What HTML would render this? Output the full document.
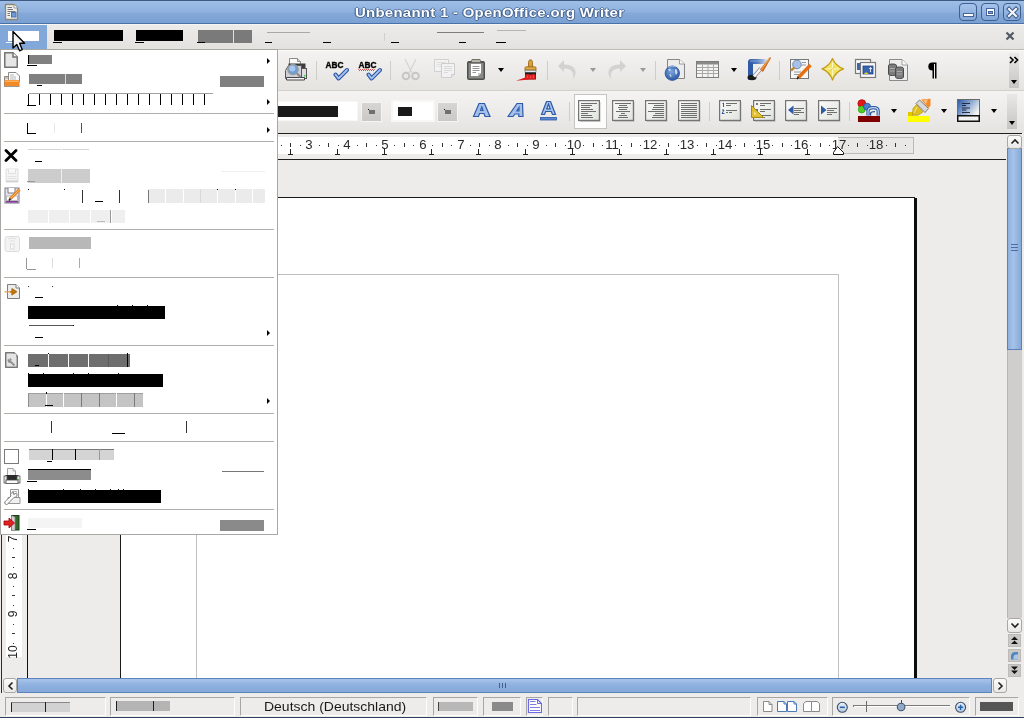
<!DOCTYPE html>
<html><head><meta charset="utf-8">
<style>
*{margin:0;padding:0;box-sizing:border-box}
body{-webkit-font-smoothing:antialiased}
html,body{width:1024px;height:718px;overflow:hidden;background:#edeceb;font-family:"Liberation Sans",sans-serif;position:relative}
div,svg{position:absolute}
#title{left:0;top:0;width:1024px;height:24px;background:linear-gradient(#9fbee8 0,#8fb1de 50%,#85a9d8 54%,#7aa1d3 100%);border-top:1px solid #3d5a80;border-bottom:1px solid #4a70a8}
#ttext{will-change:transform;left:355px;top:5px;white-space:nowrap;font-weight:bold;font-size:13px;line-height:15px;letter-spacing:0.25px;transform:scaleX(1.148);transform-origin:0 0;color:#fff;text-shadow:1px 0 0 rgba(50,80,125,.7),-1px 0 0 rgba(50,80,125,.7),0 1px 0 rgba(50,80,125,.7),0 -1px 0 rgba(50,80,125,.5)}
.wb{top:3px;width:18px;height:18px;border:1px solid #3f5f8f;border-radius:4px;background:linear-gradient(#a6c3ea,#82a6d8)}
#menubar{left:0;top:24px;width:1024px;height:26px;background:linear-gradient(#ecebe9,#e8e7e5 50%,#e2e1de);border-top:1px solid #f6f5f4;border-bottom:1px solid #bfbcb8}
.tb{left:0;width:1024px;background:linear-gradient(#f4f3f2,#ebeae8 60%,#e4e3e0)}
.sep{width:1px;background:#cfcdc9}
.k{background:#000}
.g{background:#6e6e6e}
.ul{height:1px;background:#000}
.arr{width:0;height:0;border-left:3px solid #000;border-top:3px solid transparent;border-bottom:3px solid transparent}
.msep{left:4px;width:270px;height:1px;background:#b0aeab}
.dd{width:0;height:0;border-top:4px solid #000;border-left:3.5px solid transparent;border-right:3.5px solid transparent}
.sf{top:697px;height:19px;border:1px solid #a9a7a3;border-right-color:#fdfdfc;border-bottom-color:#fdfdfc}
.tx{will-change:transform}
.rn{will-change:transform;width:40px;text-align:center;font-size:12px;line-height:14px;color:#2a2a2a;transform:scaleX(1.1)}
.rv{will-change:transform;width:40px;height:14px;text-align:center;font-size:12px;line-height:14px;color:#222;transform:rotate(-90deg)}
</style></head><body>
<!-- TITLE -->
<div id="title"></div>
<svg style="left:4px;top:3px" width="15" height="18" viewBox="0 0 15 18">
<path d="M1.5 1.5H10L13.5 5V16.5H1.5Z" fill="#efefec" stroke="#8c8678" stroke-width="1.3" stroke-linejoin="round"/>
<path d="M10 1.5V5H13.5" fill="#fff" stroke="#8c8678" stroke-width="0.8"/>
<path d="M3.5 4.5H8M3.5 6.5H9M3.5 8.5H11.5M3.5 10.5H6M3.5 12.5H6" stroke="#777" stroke-width="1"/>
<rect x="7.5" y="9.5" width="4.5" height="4.5" fill="#6f9ad6" stroke="#4a74b8" stroke-width="1"/>
</svg>
<div id="ttext">Unbenannt 1 - OpenOffice.org Writer</div>
<div class="wb" style="left:959px"><div style="left:3px;top:9px;width:11px;height:4px;background:#fff;border:1px solid #44649a"></div></div>
<div class="wb" style="left:981px"><div style="left:4px;top:4px;width:9px;height:8px;background:#fff;border:1px solid #44649a"><div style="left:1px;top:2px;width:5px;height:3px;background:#7a9cd0;border:1px solid #44649a"></div></div></div>
<div class="wb" style="left:1003px"><svg style="left:2px;top:2px" width="14" height="14" viewBox="0 0 14 14"><path d="M3 3L10 10M10 3L3 10" stroke="#3d5a88" stroke-width="4.2" stroke-linecap="square"/><path d="M3 3L10 10M10 3L3 10" stroke="#f4f6fa" stroke-width="2.2" stroke-linecap="square"/></svg></div>
<!-- MENUBAR -->
<div id="menubar"></div>
<svg style="left:1005px;top:31px" width="10" height="10" viewBox="0 0 10 10"><path d="M1.5 1.5L8.5 8.5M8.5 1.5L1.5 8.5" stroke="#525a64" stroke-width="2.2"/></svg>

<div style="left:0;top:25px;width:47px;height:24px;background:#82a8d9"></div>
<div style="left:8px;top:31px;width:31px;height:10px;background:#fff"></div>
<div class="ul" style="left:6px;top:42px;width:7px;background:#fff"></div>
<div class="k" style="left:54px;top:30px;width:69px;height:11px"></div>
<div class="ul" style="left:53px;top:42px;width:9px"></div>
<div class="k" style="left:136px;top:30px;width:47px;height:11px"></div>
<div class="ul" style="left:135px;top:42px;width:9px"></div>
<div style="left:198px;top:30px;width:54px;height:13px;background:#7a7a7a"></div>
<div style="left:233px;top:30px;width:1px;height:13px;background:#e0e0e0"></div>
<div class="ul" style="left:197px;top:42px;width:8px"></div>
<div style="left:267px;top:32px;width:43px;height:1px;background:#a8a8a8"></div>
<div class="ul" style="left:265px;top:42px;width:7px"></div>
<div class="ul" style="left:323px;top:42px;width:8px"></div>
<div style="left:384px;top:33px;width:1px;height:8px;background:#d0d0d0"></div>
<div class="ul" style="left:391px;top:42px;width:8px"></div>
<div style="left:437px;top:32px;width:47px;height:1px;background:#7c7c7c"></div>
<div class="ul" style="left:459px;top:42px;width:7px"></div>
<div style="left:497px;top:30px;width:29px;height:1px;background:#b4b4b4"></div>
<div class="ul" style="left:496px;top:42px;width:10px"></div>
<!-- TOOLBAR 1 -->
<div class="tb" style="top:50px;height:41px;border-bottom:1px solid #d3d1cd"></div><div style="left:0;top:50px;width:1024px;height:1px;background:#fafaf9"></div>
<!-- TB1 ICONS -->
<svg style="left:284px;top:57px" width="24" height="24" viewBox="0 0 24 24">
<path d="M5.5 1.5H13.5L16.5 4.5V8H5.5Z" fill="#fafafa" stroke="#8a8a8a"/>
<path d="M13.5 1.5V4.5H16.5" fill="#ddd" stroke="#8a8a8a"/>
<path d="M4.5 6.5H21.5V19.5H4.5Z" fill="#3c3c3c"/>
<path d="M1.5 13.5L4.5 8.5H17.5V21.5H1.5Z" fill="#cfd0d6" stroke="#555"/>
<rect x="17.5" y="11.5" width="5" height="10" fill="#dcdde2" stroke="#555"/>
<rect x="20" y="18" width="1.5" height="1.5" fill="#3c3"/>
<path d="M2.5 20.5H20.5V23H2.5Z" fill="#f4f4f4" stroke="#444"/>
<line x1="12.5" y1="16" x2="16.5" y2="20" stroke="#888" stroke-width="2"/>
<circle cx="9" cy="12.5" r="5.2" fill="#6f9fd6" stroke="#9a9a9a" stroke-width="1.2"/>
<circle cx="8.3" cy="11.5" r="3" fill="#a9c8ee"/>
</svg>
<div class="sep" style="left:316px;top:61px;height:19px"></div>
<svg style="left:325px;top:61px;will-change:transform" width="24" height="20" viewBox="0 0 24 20">
<text x="0.5" y="7.2" font-family="Liberation Sans" font-weight="bold" font-size="8.6" fill="#000" stroke="#000" stroke-width="0.35" textLength="18" lengthAdjust="spacingAndGlyphs">ABC</text>
<path d="M10.5 13.5L13.5 17.5L22 9" fill="none" stroke="#2a55a8" stroke-width="4" stroke-linecap="round" stroke-linejoin="round"/>
<path d="M10.5 13.5L13.5 17.5L22 9" fill="none" stroke="#a7c3ec" stroke-width="1.8" stroke-linecap="round" stroke-linejoin="round"/>
</svg>
<svg style="left:358px;top:61px;will-change:transform" width="24" height="20" viewBox="0 0 24 20">
<text x="0.5" y="7.2" font-family="Liberation Sans" font-weight="bold" font-size="8.6" fill="#000" stroke="#000" stroke-width="0.35" textLength="18" lengthAdjust="spacingAndGlyphs">ABC</text>
<path d="M0.5 8.5l1 1l1-1l1 1l1-1l1 1l1-1l1 1l1-1l1 1l1-1l1 1l1-1l1 1l1-1l1 1l1-1" fill="none" stroke="#e01010" stroke-width="1"/>
<path d="M10.5 13.5L13.5 17.5L22 9" fill="none" stroke="#2a55a8" stroke-width="4" stroke-linecap="round" stroke-linejoin="round"/>
<path d="M10.5 13.5L13.5 17.5L22 9" fill="none" stroke="#a7c3ec" stroke-width="1.8" stroke-linecap="round" stroke-linejoin="round"/>
</svg>
<div class="sep" style="left:390px;top:61px;height:19px"></div>
<svg style="left:401px;top:58px" width="20" height="23" viewBox="0 0 20 23">
<path d="M4 1L11 15M15 1L8 15" stroke="#d4d4d4" stroke-width="1.2"/>
<circle cx="5" cy="18" r="3.3" fill="none" stroke="#c6c6c6" stroke-width="2"/>
<circle cx="14.5" cy="18" r="3.3" fill="none" stroke="#c6c6c6" stroke-width="2"/>
</svg>
<svg style="left:433px;top:58px" width="24" height="21" viewBox="0 0 24 21"><path d="M1.5 1.5H15.5V13.5H1.5Z" fill="#f2f2f2" stroke="#d0d0d0"/><path d="M3.5 4.5H13M3.5 6.5H13M3.5 8.5H8" stroke="#e0e0e0"/><path d="M8.5 5.5H21.5V16.5L18.5 19.5H8.5Z" fill="#f2f2f2" stroke="#cdcdcd"/><path d="M11 8.5H19M11 10.5H19M11 12.5H19M11 14.5H15" stroke="#dadada"/><path d="M18.5 19.5V16.5H21.5" fill="#e8e8e8" stroke="#cdcdcd"/></svg>
<svg style="left:466px;top:58px" width="20" height="23" viewBox="0 0 20 23"><rect x="1" y="3" width="18" height="19" rx="2" fill="#4e4e4c"/><rect x="2.5" y="5" width="15" height="15.5" fill="#8a8a86"/><path d="M6 1.5H14L15 4.5H5Z" fill="#b8b8a8" stroke="#666" stroke-width="0.9"/><path d="M5 6H15V15L12 18H5Z" fill="#fff"/><path d="M12 18V15H15" fill="#ccc"/><path d="M6.5 8.5H13.5M6.5 10.5H13.5M6.5 12.5H13.5M6.5 14.5H10" stroke="#8a8a8a" stroke-width="0.9"/></svg>
<div class="dd" style="left:498px;top:68px"></div>
<svg style="left:512px;top:56px" width="30" height="28" viewBox="0 0 30 28"><path d="M16.5 11.5V6.5C16.5 4.5 17.5 3.8 18.5 3.8C19.5 3.8 20.5 4.5 20.5 6.5V11.5Z" fill="#d9a040" stroke="#9a6a18" stroke-width="0.9"/><path d="M13 14V12C13 11.2 13.5 10.8 14.5 10.8H22.5C23.5 10.8 24 11.2 24 12V14Z" fill="#e0aa48" stroke="#9a6a18" stroke-width="0.9"/><rect x="13" y="14.2" width="11" height="2.2" fill="#e8e8e8" stroke="#555" stroke-width="0.5"/><rect x="13" y="16.4" width="11" height="7" fill="#1c1c1c"/><path d="M13.5 18.5L16 18L18.5 18.8L21 18L23.5 18.5V23.5H18L4 24.8L9 23L13 21.5Z" fill="#e01c1c"/><path d="M15 19.5L16 22M18 19.5L19 22M21 19.5L22 22" stroke="#f07070" stroke-width="0.7"/></svg>
<div class="sep" style="left:547px;top:61px;height:19px"></div>
<svg style="left:557px;top:59px" width="21" height="21" viewBox="0 0 21 21">
<path d="M7 1L1 7L7 13V9.5C12 9.5 15 11 16 15C16.5 17 16 19 15.5 20C19 17 19.5 12 17 9C15 7 12 5.5 7 5.5Z" fill="#d2d2d2"/>
</svg>
<div class="dd" style="left:590px;top:68px;border-top-color:#9a9a9a"></div>
<svg style="left:606px;top:59px" width="21" height="21" viewBox="0 0 21 21">
<path d="M14 1L20 7L14 13V9.5C9 9.5 6 11 5 15C4.5 17 5 19 5.5 20C2 17 1.5 12 4 9C6 7 9 5.5 14 5.5Z" fill="#d2d2d2"/>
</svg>
<div class="dd" style="left:640px;top:68px;border-top-color:#9a9a9a"></div>
<div class="sep" style="left:655px;top:61px;height:19px"></div>
<svg style="left:660px;top:55px" width="30" height="30" viewBox="0 0 30 30"><defs><radialGradient id="glb" cx="0.45" cy="0.4" r="0.6"><stop offset="0" stop-color="#7ea6dc"/><stop offset="1" stop-color="#2a58a6"/></radialGradient></defs><path d="M7.5 4.5H19.5L24.5 9V23.5H7.5Z" fill="#ececec" stroke="#858585" stroke-width="1"/><path d="M19.5 4.5V9H24.5" fill="#fafafa" stroke="#858585" stroke-width="0.8"/><circle cx="12.3" cy="18.2" r="7.2" fill="url(#glb)" stroke="#2a4f96" stroke-width="0.8"/><path d="M8 14.5L10 13.5L11 15L9.5 16.5Z M9.5 19L11 19.5L11.5 22L10 21.5Z M15 14L17 14.5L17.5 18L16 20L15 17.5Z" fill="#c8d8ee"/><path d="M8.5 12.5C10.5 11 14 11 16 12" stroke="#b8d0f0" stroke-width="0.8" fill="none"/></svg>
<svg style="left:696px;top:61px" width="24" height="18" viewBox="0 0 24 18">
<rect x="0.5" y="0.5" width="22" height="16" fill="#f4f4f2" stroke="#7c7c7a"/>
<rect x="1" y="1" width="21" height="2.5" fill="#8a8a88"/>
<path d="M1 6.5H22M1 9.5H22M1 12.5H22M6.5 3.5V16M12 3.5V16M17.5 3.5V16" stroke="#a8a8a6"/>
</svg>
<div class="dd" style="left:731px;top:68px"></div>
<svg style="left:744px;top:55px" width="30" height="30" viewBox="0 0 30 30"><defs><linearGradient id="drw" x1="0" y1="0" x2="1" y2="0"><stop offset="0" stop-color="#2a55a2"/><stop offset="0.5" stop-color="#5a82c0"/><stop offset="1" stop-color="#5a82c0" stop-opacity="0"/></linearGradient></defs><path d="M4 24.5V7C4 5 5 4 7 4H24V9H9V24.5Z" fill="url(#drw)"/><path d="M4 8V24.5H9V8Z" fill="#2f5aa6"/><path d="M6 6H20" stroke="#8eaee0" stroke-width="0.8"/><ellipse cx="8" cy="22.5" rx="4.5" ry="2.7" fill="#1a1a1a"/><path d="M10 21.5L17 13.5" stroke="#888" stroke-width="4"/><path d="M10 21.5L17 13.5" stroke="#f4f4f4" stroke-width="2.6"/><path d="M16 14.5L19 17L27 3L26 2Z" fill="#c8661a"/><path d="M17.5 15L25.5 3.5" stroke="#f0a050" stroke-width="1.2"/></svg>
<div class="sep" style="left:779px;top:61px;height:19px"></div>
<svg style="left:789px;top:58px" width="24" height="22" viewBox="0 0 24 22">
<rect x="1.5" y="1.5" width="18" height="19" fill="#f6f6f6" stroke="#777"/>
<path d="M13 4.5H17M13 7H17M5 14H12M5 16.5H10" stroke="#999"/>
<circle cx="8" cy="6.5" r="4.3" fill="#a7c2e6" stroke="#6e8cb8"/>
<path d="M5.5 9.5L2 12.5" stroke="#c58a30" stroke-width="2.5"/>
<path d="M9 20L21.5 7" stroke="#e86e10" stroke-width="3.4"/>
<path d="M8 21L9.5 19" stroke="#222" stroke-width="1.5"/>
</svg>
<svg style="left:821px;top:57px" width="24" height="25" viewBox="0 0 24 25"><path d="M11.5 1.5Q14.5 9 22.5 11.8Q14.5 14.5 11.5 23Q8.5 14.5 1 11.8Q8.5 9 11.5 1.5Z" fill="#f2e464" stroke="#c49c18" stroke-width="1.3" stroke-linejoin="round"/><path d="M11.5 5V19M5 11.8H18" stroke="#fcf6c0" stroke-width="1"/><path d="M11.5 11.8L14 9.5M11.5 11.8L9 14" stroke="#d8c030" stroke-width="0.8"/></svg>
<svg style="left:854px;top:58px" width="23" height="21" viewBox="0 0 23 21"><rect x="1.5" y="1.5" width="15" height="14" fill="#f8f8f8" stroke="#7a7a7a" stroke-width="1.2"/><rect x="3" y="5" width="5" height="7" fill="#3a66b0"/><rect x="6.5" y="4.5" width="15" height="15" fill="#fafafa" stroke="#7a7a7a" stroke-width="1.2"/><rect x="9" y="8" width="10" height="8" fill="#3a66b0" stroke="#20407a" stroke-width="0.8"/><path d="M10 16C11 14 13.5 14 14.5 16Z" fill="#f0d020"/><path d="M16.5 9.5V14M15 11L16.5 9.5L18 11" stroke="#fff" stroke-width="0.8" fill="none"/></svg>
<svg style="left:887px;top:58px" width="22" height="24" viewBox="0 0 22 24"><path d="M2.5 1.5H15L20.5 7V22.5H2.5Z" fill="#ededed" stroke="#8a8a8a"/><path d="M15 1.5V7H20.5" fill="#fafafa" stroke="#8a8a8a" stroke-width="0.8"/><path d="M1.5 7.5C1.5 5.5 9.5 5.5 9.5 7.5V16C9.5 18 1.5 18 1.5 16Z" fill="#7c7c7c" stroke="#4a4a4a"/><path d="M3 10.5H8M3 13H8" stroke="#b0b0b0" stroke-width="0.9"/><path d="M8.5 10.5C8.5 8.5 16.5 8.5 16.5 10.5V19C16.5 21 8.5 21 8.5 19Z" fill="#7c7c7c" stroke="#4a4a4a"/><path d="M10 13.5H15M10 16H15" stroke="#b0b0b0" stroke-width="0.9"/></svg>
<svg style="left:928px;top:62px" width="9" height="17" viewBox="0 0 9 17"><path d="M4 0.5H8.5V16.5H7V2H6V16.5H4.5V8.5C1.5 8.5 0.3 7 0.3 4.5C0.3 2 1.8 0.5 4 0.5Z" fill="#000"/></svg>
<div style="left:1009px;top:53px;width:10px;height:35px;background:linear-gradient(#e9e8e6,#c6c5c3)"></div>
<svg style="left:1009px;top:56px" width="11" height="8" viewBox="0 0 11 8"><path d="M1 1L4 4L1 7M5.5 1L8.5 4L5.5 7" fill="none" stroke="#000" stroke-width="1.6"/></svg>
<div class="dd" style="left:1011px;top:80px"></div>
<!-- TOOLBAR 2 -->
<div class="tb" style="top:91px;height:42px"></div>
<svg width="0" height="0" style="left:0;top:0"><defs><linearGradient id="fg" x1="0" y1="0" x2="1" y2="1"><stop offset="0" stop-color="#fbfbfb"/><stop offset="1" stop-color="#dfe3dc"/></linearGradient></defs></svg><div style="left:270px;top:101px;width:88px;height:20px;background:#fff;border:1px solid #f6f6f6"></div>
<div class="k" style="left:278px;top:106px;width:60px;height:11px;background:#1a1a1a"></div>
<div style="left:361px;top:102px;width:21px;height:20px;background:linear-gradient(#d6d5d3,#cac9c7);border:1px solid #f4f4f3"></div><div style="left:369px;top:110px;width:6px;height:4px;background:#707070"></div><div style="left:368px;top:109px;width:1px;height:1px;background:#111"></div>
<div style="left:391px;top:100px;width:44px;height:22px;background:#fff;border:2px solid #f7f7f6"></div>
<div style="left:398px;top:107px;width:14px;height:9px;background:#1a1a1a"></div>
<div style="left:437px;top:102px;width:21px;height:20px;background:linear-gradient(#d6d5d3,#cac9c7);border:1px solid #f4f4f3"></div><div style="left:445px;top:110px;width:6px;height:4px;background:#707070"></div><div style="left:444px;top:109px;width:1px;height:1px;background:#111"></div>
<svg style="left:472px;top:102px" width="20" height="17" viewBox="0 0 20 17"><path d="M1.5 14.5L7 1.5H12.5L18 14.5H13L12 11.5H7.5L6.5 14.5Z M8.5 8.5H11L9.8 5Z" fill="#a4c0ea" stroke="#2e5aa8" stroke-width="1.2" fill-rule="evenodd"/></svg>
<svg style="left:507px;top:102px" width="18" height="17" viewBox="0 0 18 17"><path d="M1 14.5L10 1.5H15.5L16 14.5H11.8L11.8 12H8L6 14.5Z M9.8 9H12L12 5.5Z" fill="#a4c0ea" stroke="#2e5aa8" stroke-width="1.2" fill-rule="evenodd"/></svg>
<svg style="left:540px;top:101px" width="18" height="21" viewBox="0 0 18 21"><path d="M1.5 13.5L6.5 0.5H10.5L15.5 13.5H12.5L11.3 10.5H5.7L4.5 13.5Z M6.8 7.8H10.2L8.5 3Z" fill="#a4c0ea" stroke="#2e5aa8" stroke-width="1.2" fill-rule="evenodd"/><rect x="0.5" y="16.5" width="16" height="2.5" fill="#5b86cc" stroke="#2e5aa8" stroke-width="0.8"/></svg>
<div class="sep" style="left:569px;top:102px;height:19px"></div>
<div style="left:574px;top:94px;width:33px;height:35px;background:#fdfdfd;border:1px solid #c6c4c0"></div>
<svg style="left:578px;top:100px" width="23" height="22" viewBox="0 0 23 22"><rect x="1.5" y="2" width="21" height="20" fill="#c4c4c2"/><rect x="0.6" y="0.6" width="20.8" height="19.8" fill="url(#fg)" stroke="#747472" stroke-width="1.2"/><rect x="3" y="3" width="16" height="1" fill="#6e6e6c"/><rect x="3" y="5" width="11" height="1" fill="#6e6e6c"/><rect x="3" y="7" width="9" height="1" fill="#6e6e6c"/><rect x="3" y="9" width="12" height="1" fill="#6e6e6c"/><rect x="3" y="11" width="15" height="1" fill="#6e6e6c"/><rect x="3" y="13" width="7" height="1" fill="#6e6e6c"/><rect x="3" y="15" width="11" height="1" fill="#6e6e6c"/><rect x="3" y="17" width="12" height="1" fill="#6e6e6c"/></svg>
<svg style="left:612px;top:100px" width="23" height="22" viewBox="0 0 23 22"><rect x="1.5" y="2" width="21" height="20" fill="#c4c4c2"/><rect x="0.6" y="0.6" width="20.8" height="19.8" fill="url(#fg)" stroke="#747472" stroke-width="1.2"/><rect x="3" y="3" width="16" height="1" fill="#6e6e6c"/><rect x="7" y="5" width="8" height="1" fill="#6e6e6c"/><rect x="6" y="7" width="10" height="1" fill="#6e6e6c"/><rect x="7" y="9" width="8" height="1" fill="#6e6e6c"/><rect x="4" y="11" width="14" height="1" fill="#6e6e6c"/><rect x="9" y="13" width="4" height="1" fill="#6e6e6c"/><rect x="7" y="15" width="8" height="1" fill="#6e6e6c"/><rect x="6" y="17" width="10" height="1" fill="#6e6e6c"/></svg>
<svg style="left:645px;top:100px" width="23" height="22" viewBox="0 0 23 22"><rect x="1.5" y="2" width="21" height="20" fill="#c4c4c2"/><rect x="0.6" y="0.6" width="20.8" height="19.8" fill="url(#fg)" stroke="#747472" stroke-width="1.2"/><rect x="3" y="3" width="16" height="1" fill="#6e6e6c"/><rect x="9" y="5" width="10" height="1" fill="#6e6e6c"/><rect x="8" y="7" width="11" height="1" fill="#6e6e6c"/><rect x="7" y="9" width="12" height="1" fill="#6e6e6c"/><rect x="3" y="11" width="16" height="1" fill="#6e6e6c"/><rect x="10" y="13" width="9" height="1" fill="#6e6e6c"/><rect x="8" y="15" width="11" height="1" fill="#6e6e6c"/><rect x="7" y="17" width="12" height="1" fill="#6e6e6c"/></svg>
<svg style="left:678px;top:100px" width="23" height="22" viewBox="0 0 23 22"><rect x="1.5" y="2" width="21" height="20" fill="#c4c4c2"/><rect x="0.6" y="0.6" width="20.8" height="19.8" fill="url(#fg)" stroke="#747472" stroke-width="1.2"/><rect x="3" y="3" width="16" height="1" fill="#6e6e6c"/><rect x="3" y="5" width="16" height="1" fill="#6e6e6c"/><rect x="3" y="7" width="16" height="1" fill="#6e6e6c"/><rect x="3" y="9" width="16" height="1" fill="#6e6e6c"/><rect x="3" y="11" width="16" height="1" fill="#6e6e6c"/><rect x="3" y="13" width="16" height="1" fill="#6e6e6c"/><rect x="3" y="15" width="16" height="1" fill="#6e6e6c"/><rect x="3" y="17" width="16" height="1" fill="#6e6e6c"/></svg>
<div class="sep" style="left:709px;top:102px;height:19px"></div>
<svg style="left:719px;top:100px" width="23" height="22" viewBox="0 0 23 22"><rect x="1.5" y="2" width="21" height="20" fill="#c4c4c2"/><rect x="0.6" y="0.6" width="20.8" height="19.8" fill="url(#fg)" stroke="#747472" stroke-width="1.2"/><rect x="7" y="3" width="11" height="1" fill="#6e6e6c"/><rect x="7" y="5" width="5" height="1" fill="#6e6e6c"/><rect x="7" y="10" width="11" height="1" fill="#6e6e6c"/><rect x="7" y="12" width="2" height="1" fill="#6e6e6c"/><rect x="10" y="12" width="3" height="1" fill="#6e6e6c"/><path d="M3.5 3.5L4.5 3V7" stroke="#2e5aa8" stroke-width="1" fill="none"/><path d="M3 10H5L3 13.5H5.5" stroke="#2e5aa8" stroke-width="1" fill="none"/></svg>
<svg style="left:753px;top:100px" width="23" height="22" viewBox="0 0 23 22"><rect x="1.5" y="2" width="21" height="20" fill="#c4c4c2"/><rect x="0.6" y="0.6" width="20.8" height="19.8" fill="url(#fg)" stroke="#747472" stroke-width="1.2"/><rect x="7" y="3" width="11" height="1" fill="#6e6e6c"/><rect x="7" y="5" width="5" height="1" fill="#6e6e6c"/><rect x="7" y="9" width="11" height="1" fill="#6e6e6c"/><rect x="7" y="11" width="5" height="1" fill="#6e6e6c"/><rect x="7" y="15" width="11" height="1" fill="#6e6e6c"/><rect x="7" y="17" width="5" height="1" fill="#6e6e6c"/><rect x="3" y="3" width="2" height="2" fill="#777"/><rect x="3" y="9" width="2" height="2" fill="#777"/></svg>
<svg style="left:750px;top:104px" width="15" height="15" viewBox="0 0 15 15"><path d="M1.5 1.5L13.5 13.5H1.5Z" fill="#e0c030" stroke="#a88a10" stroke-width="1"/><path d="M4 7.5L7 10.5H4Z" fill="#f6e69a"/></svg>
<svg style="left:785px;top:100px" width="23" height="22" viewBox="0 0 23 22"><rect x="1.5" y="2" width="21" height="20" fill="#c4c4c2"/><rect x="0.6" y="0.6" width="20.8" height="19.8" fill="url(#fg)" stroke="#747472" stroke-width="1.2"/><rect x="9" y="8" width="10" height="1" fill="#6e6e6c"/><rect x="9" y="10" width="7" height="1" fill="#6e6e6c"/><rect x="9" y="12" width="10" height="1" fill="#6e6e6c"/><rect x="9" y="14" width="5" height="1" fill="#6e6e6c"/><path d="M3 10L8.5 5.5V14.5Z" fill="#2e5aa8"/></svg>
<svg style="left:818px;top:100px" width="23" height="22" viewBox="0 0 23 22"><rect x="1.5" y="2" width="21" height="20" fill="#c4c4c2"/><rect x="0.6" y="0.6" width="20.8" height="19.8" fill="url(#fg)" stroke="#747472" stroke-width="1.2"/><rect x="9" y="8" width="10" height="1" fill="#6e6e6c"/><rect x="9" y="10" width="7" height="1" fill="#6e6e6c"/><rect x="9" y="12" width="10" height="1" fill="#6e6e6c"/><rect x="9" y="14" width="5" height="1" fill="#6e6e6c"/><path d="M8.5 10L3 5.5V14.5Z" fill="#2e5aa8"/></svg>
<div class="sep" style="left:849px;top:102px;height:19px"></div>
<svg style="left:855px;top:96px" width="28" height="28" viewBox="0 0 28 28"><circle cx="6.8" cy="7.6" r="3.9" fill="#e01818" stroke="#b00000" stroke-width="0.8"/><circle cx="6.7" cy="13.5" r="3.4" fill="#50d020" stroke="#30a010" stroke-width="0.8"/><circle cx="12.1" cy="10.7" r="3.5" fill="#4a80d0" stroke="#2050a0" stroke-width="0.8"/><path d="M13 19.5V15C13 12.5 15 11.6 18.5 11.6C22 11.6 23.2 12.8 23.2 15V19.5" fill="none" stroke="#2455a5" stroke-width="3.2"/><path d="M13 19.5V15C13 12.5 15 11.6 18.5 11.6C22 11.6 23.2 12.8 23.2 15V19.5" fill="none" stroke="#c8daf2" stroke-width="1.2"/><path d="M15.5 19.5V17.5C15.5 16.2 16.8 15.6 20 15.6" fill="none" stroke="#2455a5" stroke-width="1.4"/><rect x="3" y="20" width="22" height="6" fill="#800000"/></svg>
<div class="dd" style="left:891px;top:109px"></div>
<svg style="left:905px;top:96px" width="28" height="28" viewBox="0 0 28 28"><rect x="3" y="20" width="22" height="6" fill="#ffff00"/><rect x="3" y="16" width="5" height="4" fill="#e0c800"/><path d="M7.4 19.2L8 12.5L11.5 8.5L18 16L13 19.2Z" fill="#e0c020" stroke="#b89a10" stroke-width="0.7"/><path d="M9 17L12 11" stroke="#f8ec90" stroke-width="0.9"/><path d="M11 7.5L14.5 4L23.5 12.5L20 16.5Z" fill="#d8d8d8" stroke="#707070" stroke-width="0.9"/><path d="M16 3.5L25.5 2.8V9.5L23.5 12Z" fill="#f28a2a"/><path d="M18 4L23 3.5L21 8Z" fill="#fbc080"/></svg>
<div class="dd" style="left:941px;top:109px"></div>
<svg style="left:957px;top:99px" width="24" height="24" viewBox="0 0 24 24"><defs><linearGradient id="bgc" x1="0" y1="0" x2="1" y2="0.6"><stop offset="0" stop-color="#2a56a6"/><stop offset="0.45" stop-color="#7d9ccc"/><stop offset="1" stop-color="#f4f6f4"/></linearGradient></defs><rect x="0.5" y="0.5" width="22" height="17" fill="url(#bgc)" stroke="#6a6a6a"/><path d="M5 4.5H13M5 6.5H9M5 9H13M5 11H9.5M5 13.5H13" stroke="#1a2030" stroke-width="0.9"/><rect x="0.75" y="16.75" width="21.5" height="5.5" fill="#f2f2f2" stroke="#111" stroke-width="1.5"/></svg>
<div class="dd" style="left:991px;top:109px"></div>
<div style="left:1007px;top:94px;width:10px;height:35px;background:linear-gradient(#e9e8e6,#c6c5c3)"></div>
<div class="dd" style="left:1009px;top:121px"></div>
<div style="left:0;top:133px;width:1022px;height:1px;background:#1e1e1e"></div>
<!-- RULER -->
<div style="left:0;top:134px;width:1006px;height:25px;background:#edeceb"></div>
<div style="left:120px;top:137px;width:794px;height:17px;background:#e9e8e6;border:1px solid #bcbab6"></div>
<div style="left:196px;top:137px;width:642px;height:17px;background:#fff"></div>
<div class="rn" style="top:138px;left:138.2px">1</div>
<div style="left:168px;top:145px;width:1px;height:1px;background:#333"></div>
<div style="left:177px;top:143px;width:1px;height:4px;background:#333"></div>
<div style="left:187px;top:145px;width:1px;height:1px;background:#333"></div>
<div style="left:205px;top:145px;width:1px;height:1px;background:#333"></div>
<div style="left:215px;top:143px;width:1px;height:4px;background:#333"></div>
<div style="left:224px;top:145px;width:1px;height:1px;background:#333"></div>
<div class="rn" style="top:138px;left:213.8px">1</div>
<div style="left:243px;top:145px;width:1px;height:1px;background:#333"></div>
<div style="left:253px;top:143px;width:1px;height:4px;background:#333"></div>
<div style="left:262px;top:145px;width:1px;height:1px;background:#333"></div>
<div class="rn" style="top:138px;left:251.6px">2</div>
<div style="left:281px;top:145px;width:1px;height:1px;background:#333"></div>
<div style="left:290px;top:143px;width:1px;height:4px;background:#333"></div>
<div style="left:300px;top:145px;width:1px;height:1px;background:#333"></div>
<div class="rn" style="top:138px;left:289.4px">3</div>
<div style="left:319px;top:145px;width:1px;height:1px;background:#333"></div>
<div style="left:328px;top:143px;width:1px;height:4px;background:#333"></div>
<div style="left:338px;top:145px;width:1px;height:1px;background:#333"></div>
<div class="rn" style="top:138px;left:327.2px">4</div>
<div style="left:357px;top:145px;width:1px;height:1px;background:#333"></div>
<div style="left:366px;top:143px;width:1px;height:4px;background:#333"></div>
<div style="left:376px;top:145px;width:1px;height:1px;background:#333"></div>
<div class="rn" style="top:138px;left:365.0px">5</div>
<div style="left:394px;top:145px;width:1px;height:1px;background:#333"></div>
<div style="left:404px;top:143px;width:1px;height:4px;background:#333"></div>
<div style="left:413px;top:145px;width:1px;height:1px;background:#333"></div>
<div class="rn" style="top:138px;left:402.8px">6</div>
<div style="left:432px;top:145px;width:1px;height:1px;background:#333"></div>
<div style="left:442px;top:143px;width:1px;height:4px;background:#333"></div>
<div style="left:451px;top:145px;width:1px;height:1px;background:#333"></div>
<div class="rn" style="top:138px;left:440.6px">7</div>
<div style="left:470px;top:145px;width:1px;height:1px;background:#333"></div>
<div style="left:479px;top:143px;width:1px;height:4px;background:#333"></div>
<div style="left:489px;top:145px;width:1px;height:1px;background:#333"></div>
<div class="rn" style="top:138px;left:478.4px">8</div>
<div style="left:508px;top:145px;width:1px;height:1px;background:#333"></div>
<div style="left:517px;top:143px;width:1px;height:4px;background:#333"></div>
<div style="left:527px;top:145px;width:1px;height:1px;background:#333"></div>
<div class="rn" style="top:138px;left:516.2px">9</div>
<div style="left:546px;top:145px;width:1px;height:1px;background:#333"></div>
<div style="left:555px;top:143px;width:1px;height:4px;background:#333"></div>
<div style="left:565px;top:145px;width:1px;height:1px;background:#333"></div>
<div class="rn" style="top:138px;left:554.0px">10</div>
<div style="left:583px;top:145px;width:1px;height:1px;background:#333"></div>
<div style="left:593px;top:143px;width:1px;height:4px;background:#333"></div>
<div style="left:602px;top:145px;width:1px;height:1px;background:#333"></div>
<div class="rn" style="top:138px;left:591.8px">11</div>
<div style="left:621px;top:145px;width:1px;height:1px;background:#333"></div>
<div style="left:631px;top:143px;width:1px;height:4px;background:#333"></div>
<div style="left:640px;top:145px;width:1px;height:1px;background:#333"></div>
<div class="rn" style="top:138px;left:629.6px">12</div>
<div style="left:659px;top:145px;width:1px;height:1px;background:#333"></div>
<div style="left:668px;top:143px;width:1px;height:4px;background:#333"></div>
<div style="left:678px;top:145px;width:1px;height:1px;background:#333"></div>
<div class="rn" style="top:138px;left:667.4px">13</div>
<div style="left:697px;top:145px;width:1px;height:1px;background:#333"></div>
<div style="left:706px;top:143px;width:1px;height:4px;background:#333"></div>
<div style="left:716px;top:145px;width:1px;height:1px;background:#333"></div>
<div class="rn" style="top:138px;left:705.2px">14</div>
<div style="left:735px;top:145px;width:1px;height:1px;background:#333"></div>
<div style="left:744px;top:143px;width:1px;height:4px;background:#333"></div>
<div style="left:754px;top:145px;width:1px;height:1px;background:#333"></div>
<div class="rn" style="top:138px;left:743.0px">15</div>
<div style="left:772px;top:145px;width:1px;height:1px;background:#333"></div>
<div style="left:782px;top:143px;width:1px;height:4px;background:#333"></div>
<div style="left:791px;top:145px;width:1px;height:1px;background:#333"></div>
<div class="rn" style="top:138px;left:780.8px">16</div>
<div style="left:810px;top:145px;width:1px;height:1px;background:#333"></div>
<div style="left:820px;top:143px;width:1px;height:4px;background:#333"></div>
<div style="left:829px;top:145px;width:1px;height:1px;background:#333"></div>
<div class="rn" style="top:138px;left:818.6px">17</div>
<div style="left:848px;top:145px;width:1px;height:1px;background:#333"></div>
<div style="left:857px;top:143px;width:1px;height:4px;background:#333"></div>
<div style="left:867px;top:145px;width:1px;height:1px;background:#333"></div>
<div class="rn" style="top:138px;left:856.4px">18</div>
<div style="left:886px;top:145px;width:1px;height:1px;background:#333"></div>
<div style="left:895px;top:143px;width:1px;height:4px;background:#333"></div>
<div style="left:905px;top:145px;width:1px;height:1px;background:#333"></div>













<div style="left:243px;top:149px;width:1px;height:5px;background:#222"></div><div style="left:241px;top:154px;width:5px;height:1px;background:#222"></div><div style="left:290px;top:149px;width:1px;height:5px;background:#222"></div><div style="left:288px;top:154px;width:5px;height:1px;background:#222"></div><div style="left:337px;top:149px;width:1px;height:5px;background:#222"></div><div style="left:335px;top:154px;width:5px;height:1px;background:#222"></div><div style="left:384px;top:149px;width:1px;height:5px;background:#222"></div><div style="left:382px;top:154px;width:5px;height:1px;background:#222"></div><div style="left:431px;top:149px;width:1px;height:5px;background:#222"></div><div style="left:429px;top:154px;width:5px;height:1px;background:#222"></div><div style="left:478px;top:149px;width:1px;height:5px;background:#222"></div><div style="left:476px;top:154px;width:5px;height:1px;background:#222"></div><div style="left:525px;top:149px;width:1px;height:5px;background:#222"></div><div style="left:523px;top:154px;width:5px;height:1px;background:#222"></div><div style="left:572px;top:149px;width:1px;height:5px;background:#222"></div><div style="left:570px;top:154px;width:5px;height:1px;background:#222"></div><div style="left:619px;top:149px;width:1px;height:5px;background:#222"></div><div style="left:617px;top:154px;width:5px;height:1px;background:#222"></div><div style="left:666px;top:149px;width:1px;height:5px;background:#222"></div><div style="left:664px;top:154px;width:5px;height:1px;background:#222"></div><div style="left:713px;top:149px;width:1px;height:5px;background:#222"></div><div style="left:711px;top:154px;width:5px;height:1px;background:#222"></div><div style="left:760px;top:149px;width:1px;height:5px;background:#222"></div><div style="left:758px;top:154px;width:5px;height:1px;background:#222"></div><div style="left:807px;top:149px;width:1px;height:5px;background:#222"></div><div style="left:805px;top:154px;width:5px;height:1px;background:#222"></div>
<svg style="left:832px;top:146px" width="13" height="9"><path d="M5.5 0.5L11.5 6.5V8.5H1.5V6.5Z" fill="#fff" stroke="#111" stroke-width="1"/></svg>
<div style="left:0;top:159px;width:1006px;height:1px;background:#1e1e1e"></div>
<!-- DOC AREA -->
<div style="left:0;top:160px;width:1006px;height:518px;background:#edeceb"></div>
<div style="left:1px;top:160px;width:1px;height:533px;background:#2b2b2b"></div>
<div style="left:2px;top:160px;width:24px;height:518px;background:#edeceb"></div>
<div style="left:6px;top:274px;width:16px;height:383px;background:#fff"></div>
<div class="rv" style="left:-7px;top:304.8px">1</div>
<div style="left:13px;top:321px;width:1px;height:1px;background:#333"></div>
<div style="left:12px;top:331px;width:3px;height:1px;background:#333"></div>
<div style="left:13px;top:340px;width:1px;height:1px;background:#333"></div>
<div class="rv" style="left:-7px;top:342.6px">2</div>
<div style="left:13px;top:359px;width:1px;height:1px;background:#333"></div>
<div style="left:12px;top:368px;width:3px;height:1px;background:#333"></div>
<div style="left:13px;top:378px;width:1px;height:1px;background:#333"></div>
<div class="rv" style="left:-7px;top:380.4px">3</div>
<div style="left:13px;top:397px;width:1px;height:1px;background:#333"></div>
<div style="left:12px;top:406px;width:3px;height:1px;background:#333"></div>
<div style="left:13px;top:416px;width:1px;height:1px;background:#333"></div>
<div class="rv" style="left:-7px;top:418.2px">4</div>
<div style="left:13px;top:435px;width:1px;height:1px;background:#333"></div>
<div style="left:12px;top:444px;width:3px;height:1px;background:#333"></div>
<div style="left:13px;top:454px;width:1px;height:1px;background:#333"></div>
<div class="rv" style="left:-7px;top:456.0px">5</div>
<div style="left:13px;top:472px;width:1px;height:1px;background:#333"></div>
<div style="left:12px;top:482px;width:3px;height:1px;background:#333"></div>
<div style="left:13px;top:491px;width:1px;height:1px;background:#333"></div>
<div class="rv" style="left:-7px;top:493.8px">6</div>
<div style="left:13px;top:510px;width:1px;height:1px;background:#333"></div>
<div style="left:12px;top:520px;width:3px;height:1px;background:#333"></div>
<div style="left:13px;top:529px;width:1px;height:1px;background:#333"></div>
<div class="rv" style="left:-7px;top:531.6px">7</div>
<div style="left:13px;top:548px;width:1px;height:1px;background:#333"></div>
<div style="left:12px;top:557px;width:3px;height:1px;background:#333"></div>
<div style="left:13px;top:567px;width:1px;height:1px;background:#333"></div>
<div class="rv" style="left:-7px;top:569.4px">8</div>
<div style="left:13px;top:586px;width:1px;height:1px;background:#333"></div>
<div style="left:12px;top:595px;width:3px;height:1px;background:#333"></div>
<div style="left:13px;top:605px;width:1px;height:1px;background:#333"></div>
<div class="rv" style="left:-7px;top:607.2px">9</div>
<div style="left:13px;top:624px;width:1px;height:1px;background:#333"></div>
<div style="left:12px;top:633px;width:3px;height:1px;background:#333"></div>
<div style="left:13px;top:643px;width:1px;height:1px;background:#333"></div>
<div class="rv" style="left:-7px;top:645.0px">10</div>
<div style="left:27px;top:160px;width:1px;height:518px;background:#111"></div>
<div style="left:120px;top:197px;width:795px;height:481px;background:#fff;border-top:1px solid #1a1a1a;border-left:1px solid #1a1a1a"></div>
<div style="left:914px;top:198px;width:3px;height:480px;background:#0c0c0c"></div>
<div style="left:196px;top:274px;width:643px;height:404px;border-top:1px solid #c0c0c0;border-left:1px solid #c0c0c0;border-right:1px solid #c0c0c0"></div>
<!-- V SCROLLBAR -->
<div style="left:1006px;top:134px;width:18px;height:560px;background:#edeceb"></div>
<div style="left:1007px;top:149px;width:15px;height:469px;background:#cfcecc;border-left:1px solid #b8b6b3"></div>
<div style="left:1007px;top:148px;width:15px;height:202px;background:linear-gradient(90deg,#8db0de,#a6c3e9 40%,#86a9d9);border:1px solid #5b82bb"></div>
<div style="left:1011px;top:244px;width:7px;height:1px;background:#4c6ea2;box-shadow:0 3px 0 #4c6ea2,0 6px 0 #4c6ea2"></div>
<div style="left:1007px;top:135px;width:15px;height:14px;background:linear-gradient(#fbfbfa,#e9e8e6);border:1px solid #a9a7a3;border-radius:3px"><svg style="left:2px;top:2px" width="10" height="7"><path d="M1.5 5.5L5 2L8.5 5.5" stroke="#222" stroke-width="1.6" fill="none"/></svg></div>
<div style="left:1007px;top:618px;width:15px;height:15px;background:linear-gradient(#fbfbfa,#e9e8e6);border:1px solid #a9a7a3;border-radius:3px"><svg style="left:2px;top:3px" width="10" height="7"><path d="M1.5 1.5L5 5L8.5 1.5" stroke="#222" stroke-width="1.6" fill="none"/></svg></div>
<div style="left:1008px;top:634px;width:13px;height:13px;background:#c9c8c6;border:1px solid #bdbbb8"></div>
<svg style="left:1008px;top:634px" width="13" height="13" viewBox="0 0 13 13"><path d="M6.5 2.5L10 6H3Z M6.5 6.5L10 10H3Z" fill="#111"/></svg>
<div style="left:1008px;top:649px;width:13px;height:13px;background:#c9c8c6;border:1px solid #bdbbb8"></div>
<svg style="left:1008px;top:649px" width="13" height="13" viewBox="0 0 13 13"><path d="M3 10.5V7C3 4.5 5 3 7.5 3H10V10.5Z" fill="#4f86c0"/><path d="M5.5 10.5V8C5.5 6.5 6.5 5.5 8 5.5H10V10.5Z" fill="#a8c8e8"/></svg>
<div style="left:1008px;top:664px;width:13px;height:13px;background:#c9c8c6;border:1px solid #bdbbb8"></div>
<svg style="left:1008px;top:664px" width="13" height="13" viewBox="0 0 13 13"><path d="M3 2.5H10L6.5 6Z M3 6.5H10L6.5 10Z" fill="#111"/></svg>
<!-- H SCROLLBAR -->
<div style="left:2px;top:678px;width:1004px;height:16px;background:#edeceb"></div>
<div style="left:17px;top:678px;width:975px;height:15px;background:linear-gradient(#a7c4ea,#8eb0df 50%,#85a8d9);border:1px solid #5b82bb"></div>
<div style="left:499px;top:683px;width:1px;height:5px;background:#3f5f90;box-shadow:3px 0 0 #3f5f90,6px 0 0 #3f5f90"></div>
<div style="left:3px;top:678px;width:14px;height:15px;background:linear-gradient(#fbfbfa,#e9e8e6);border:1px solid #a9a7a3;border-radius:3px"><svg style="left:3px;top:2px" width="7" height="10"><path d="M5.5 1.5L2 5L5.5 8.5" stroke="#222" stroke-width="1.6" fill="none"/></svg></div>
<div style="left:993px;top:678px;width:14px;height:15px;background:linear-gradient(#fbfbfa,#e9e8e6);border:1px solid #a9a7a3;border-radius:3px"><svg style="left:3px;top:2px" width="7" height="10"><path d="M1.5 1.5L5 5L1.5 8.5" stroke="#222" stroke-width="1.6" fill="none"/></svg></div>
<!-- STATUS BAR -->
<div style="left:0;top:694px;width:1024px;height:24px;background:#edeceb"></div>

<div class="sf" style="left:5px;width:101px"></div>
<div style="left:11px;top:702px;width:59px;height:10px;background:#d2d2d2;border-left:1px solid #222;border-top:1px solid #8a8a8a"></div>
<div style="left:45px;top:702px;width:1px;height:10px;background:#222"></div>
<div class="sf" style="left:110px;width:125px"></div>
<div style="left:116px;top:701px;width:54px;height:10px;background:#b4b4b4;border-left:1px solid #222"></div>
<div style="left:153px;top:701px;width:1px;height:10px;background:#222"></div>
<div class="sf" style="left:240px;width:187px"></div>
<div class="tx" style="left:264px;top:699px;font-size:13px;line-height:15px;color:#1a1a1a;white-space:nowrap;transform:scaleX(1.075);transform-origin:0 0">Deutsch (Deutschland)</div>
<div class="sf" style="left:433px;width:45px"></div>
<div style="left:438px;top:702px;width:35px;height:9px;background:#b8b8b8;border-left:1px solid #444"></div>
<div class="sf" style="left:483px;width:38px"></div>
<div style="left:492px;top:702px;width:21px;height:9px;background:#8a8a8a"></div>
<div class="sf" style="left:526px;width:17px"></div>
<svg style="left:527px;top:698px" width="16" height="16" viewBox="0 0 16 16"><path d="M1.5 1.5H10.5L14.5 5.5V14.5H1.5Z" fill="#fff" stroke="#6a6ae6" stroke-width="1.2"/><path d="M10.5 1.5V5.5H14.5" fill="none" stroke="#6a6ae6"/><path d="M3 3.5H8.5M3 6.5H9.5M3 9.5H13M3 12.5H13" stroke="#7070e0" stroke-width="0.9"/></svg>
<div class="sf" style="left:548px;width:25px"></div>
<div class="sf" style="left:577px;width:174px"></div>
<div class="sf" style="left:757px;width:71px"></div>
<svg style="left:763px;top:701px" width="10" height="11" viewBox="0 0 10 11"><path d="M0.5 0.5H6L9 3.5V10.5H0.5Z" fill="#fff" stroke="#8a8a8a"/><path d="M6 0.5V3.5H9" fill="none" stroke="#8a8a8a"/></svg>
<svg style="left:777px;top:701px" width="21" height="11" viewBox="0 0 21 11"><path d="M0.5 0.5H7L9.5 3V10.5H0.5Z" fill="#fff" stroke="#4a78b8"/><path d="M10.5 0.5H17L19.5 3V10.5H10.5Z" fill="#fff" stroke="#4a78b8"/><path d="M7 0.5V3H9.5M17 0.5V3H19.5" fill="none" stroke="#4a78b8"/></svg>
<svg style="left:803px;top:701px" width="18" height="11" viewBox="0 0 18 11"><path d="M0.5 2.5L3 0.5H8.5V10.5H0.5Z" fill="#fff" stroke="#8a8a8a"/><path d="M8.5 0.5H14L16.5 2.5V10.5H8.5Z" fill="#fff" stroke="#8a8a8a"/></svg>
<div class="sf" style="left:832px;width:138px"></div>
<svg style="left:835px;top:700px" width="132" height="15" viewBox="0 0 132 15"><defs><linearGradient id="zc" x1="0" y1="0" x2="0" y2="1"><stop offset="0" stop-color="#e8eef6"/><stop offset="1" stop-color="#b8c8dc"/></linearGradient></defs><line x1="18" y1="5.5" x2="115" y2="5.5" stroke="#7a7a7a" stroke-width="1"/><line x1="18" y1="6.5" x2="115" y2="6.5" stroke="#ffffff" stroke-width="1"/><line x1="18.5" y1="5" x2="18.5" y2="7" stroke="#7a7a7a" stroke-width="1"/><line x1="31.5" y1="1" x2="31.5" y2="12" stroke="#6a6a6a" stroke-width="1"/><circle cx="7.3" cy="7.3" r="5" fill="url(#zc)" stroke="#3a4e6a" stroke-width="1.1"/><path d="M4.8 7.3H9.8" stroke="#1f64b0" stroke-width="1.5"/><line x1="66.5" y1="0" x2="66.5" y2="4" stroke="#444" stroke-width="1"/><circle cx="66.1" cy="7" r="3.8" fill="#8fa9c6" stroke="#3e5672" stroke-width="1.1"/><circle cx="125.6" cy="7.3" r="5" fill="url(#zc)" stroke="#3a4e6a" stroke-width="1.1"/><path d="M123 7.3H128.2M125.6 4.7V9.9" stroke="#1f64b0" stroke-width="1.5"/></svg>
<div class="sf" style="left:975px;width:44px"></div>
<div style="left:980px;top:702px;width:33px;height:9px;background:#555"></div>
<div style="left:0;top:717px;width:1024px;height:1px;background:#2e4260"></div>

<!-- FILE MENU -->
<div style="left:0;top:49px;width:278px;height:486px;background:#fff;border:1px solid #a9a7a4"></div>
<div class="g" style="left:28px;top:55px;width:24px;height:9px;background:#808080;border-left:1px solid #000"></div>
<div class="ul" style="left:27px;top:65px;width:10px"></div>
<div class="arr" style="left:267px;top:58px"></div>
<div style="left:29px;top:74px;width:53px;height:10px;background:#808080"></div>
<div style="left:65px;top:74px;width:1px;height:10px;background:#d8d8d8"></div>
<div class="ul" style="left:37px;top:85px;width:5px"></div>
<div style="left:220px;top:76px;width:44px;height:11px;background:#808080"></div>
<div style="left:29px;top:93px;width:184px;height:1px;background:#a0a0a0"></div>
<div style="left:28px;top:94px;width:178px;height:11px;background:repeating-linear-gradient(90deg,#000 0,#000 1px,transparent 1px,transparent 11px)"></div>
<div class="ul" style="left:27px;top:105px;width:9px"></div>
<div class="arr" style="left:267px;top:99px"></div>
<div class="msep" style="top:113px"></div>
<div style="left:27px;top:123px;width:1px;height:11px;background:#000"></div>
<div class="ul" style="left:27px;top:133px;width:9px"></div>
<div style="left:54px;top:123px;width:1px;height:10px;background:#e8e8e8"></div>
<div style="left:81px;top:123px;width:1px;height:10px;background:#555"></div>
<div class="arr" style="left:267px;top:127px"></div>
<div class="msep" style="top:141px"></div>
<div style="left:28px;top:149px;width:33px;height:1px;background:#d4d4d4"></div><div style="left:62px;top:149px;width:27px;height:1px;background:#d4d4d4"></div>
<div class="ul" style="left:35px;top:161px;width:7px"></div>
<div style="left:28px;top:169px;width:62px;height:14px;background:#cccccc"></div>
<div style="left:61px;top:169px;width:1px;height:14px;background:#f0f0f0"></div>
<div class="ul" style="left:27px;top:181px;width:8px;background:#999"></div>
<div style="left:221px;top:171px;width:44px;height:1px;background:#f0f0f0"></div>
<div style="left:28px;top:189px;width:1px;height:1px;background:#000"></div>
<div style="left:64px;top:189px;width:1px;height:1px;background:#000"></div>
<div style="left:82px;top:190px;width:1px;height:13px;background:#333"></div>
<div style="left:119px;top:190px;width:1px;height:13px;background:#333"></div>
<div class="ul" style="left:95px;top:201px;width:8px"></div>
<div style="left:148px;top:189px;width:117px;height:14px;background:#ebebeb"></div>
<div style="left:165px;top:189px;width:1px;height:14px;background:#fff"></div><div style="left:183px;top:189px;width:1px;height:14px;background:#fff"></div><div style="left:200px;top:189px;width:1px;height:14px;background:#d8d8d8"></div><div style="left:217px;top:189px;width:1px;height:14px;background:#fff"></div><div style="left:235px;top:189px;width:1px;height:14px;background:#fff"></div><div style="left:252px;top:189px;width:1px;height:14px;background:#fff"></div><div style="left:148px;top:190px;width:1px;height:13px;background:#777"></div><div style="left:217px;top:189px;width:1px;height:1px;background:#000"></div><div style="left:235px;top:189px;width:1px;height:1px;background:#000"></div>
<div style="left:28px;top:210px;width:97px;height:13px;background:repeating-linear-gradient(90deg,#efefef 0,#efefef 20px,#fff 20px,#fff 21px)"></div>
<div style="left:110px;top:210px;width:1px;height:13px;background:#999"></div>
<div class="ul" style="left:97px;top:221px;width:8px;background:#bbb"></div>
<div class="msep" style="top:229px"></div>
<div style="left:29px;top:237px;width:62px;height:12px;background:#b8b8b8"></div>
<div style="left:26px;top:258px;width:1px;height:11px;background:#999"></div>
<div class="ul" style="left:27px;top:269px;width:9px;background:#999"></div>
<div style="left:52px;top:258px;width:1px;height:10px;background:#ddd"></div>
<div style="left:79px;top:258px;width:1px;height:10px;background:#aaa"></div>
<div class="msep" style="top:277px"></div>
<div style="left:28px;top:286px;width:1px;height:1px;background:#333"></div>
<div style="left:52px;top:286px;width:1px;height:1px;background:#333"></div>
<div class="ul" style="left:35px;top:297px;width:8px"></div>
<div class="k" style="left:28px;top:306px;width:137px;height:13px"></div>
<div style="left:29px;top:325px;width:44px;height:1px;background:#555"></div>
<div class="ul" style="left:35px;top:337px;width:8px"></div>
<div class="arr" style="left:267px;top:330px"></div>
<div class="msep" style="top:345px"></div>
<div style="left:28px;top:354px;width:102px;height:13px;background:#6e6e6e"></div>
<div style="left:48px;top:354px;width:1px;height:13px;background:#fff"></div><div style="left:68px;top:354px;width:1px;height:13px;background:#fff"></div><div style="left:88px;top:354px;width:1px;height:13px;background:#fff"></div><div style="left:108px;top:354px;width:1px;height:13px;background:#5a5a5a"></div><div style="left:48px;top:353px;width:1px;height:1px;background:#000"></div>
<div style="left:127px;top:353px;width:1px;height:14px;background:#000"></div>
<div class="ul" style="left:35px;top:365px;width:4px"></div>
<div class="k" style="left:28px;top:374px;width:135px;height:13px"></div>
<div style="left:28px;top:393px;width:115px;height:14px;background:#c4c4c4;border-top:1px solid #a0a0a0;border-left:1px solid #909090"></div>
<div style="left:46px;top:393px;width:1px;height:14px;background:#fff"></div><div style="left:46px;top:392px;width:1px;height:2px;background:#000"></div><div style="left:63px;top:393px;width:1px;height:14px;background:#fff"></div><div style="left:81px;top:393px;width:1px;height:14px;background:#7a7a7a"></div><div style="left:99px;top:393px;width:1px;height:14px;background:#7a7a7a"></div><div style="left:116px;top:393px;width:1px;height:14px;background:#fff"></div><div style="left:134px;top:393px;width:1px;height:14px;background:#7a7a7a"></div>
<div class="ul" style="left:45px;top:405px;width:8px"></div>
<div class="arr" style="left:267px;top:398px"></div>
<div class="msep" style="top:413px"></div>
<div style="left:51px;top:421px;width:1px;height:12px;background:#333"></div>
<div style="left:186px;top:421px;width:1px;height:12px;background:#333"></div>
<div class="ul" style="left:112px;top:433px;width:13px"></div>
<div class="msep" style="top:441px"></div>
<div style="left:29px;top:449px;width:85px;height:11px;background:#d4d4d4;border-top:1px solid #777"></div>
<div style="left:52px;top:449px;width:1px;height:11px;background:#000"></div>
<div style="left:75px;top:449px;width:1px;height:11px;background:#000"></div>
<div style="left:99px;top:449px;width:1px;height:11px;background:#999"></div>
<div class="ul" style="left:47px;top:461px;width:5px"></div>
<div style="left:28px;top:469px;width:63px;height:11px;background:#8c8c8c;border-top:1px solid #000"></div>
<div class="ul" style="left:27px;top:481px;width:10px"></div>
<div style="left:222px;top:471px;width:42px;height:1px;background:#777"></div>
<div class="k" style="left:28px;top:490px;width:133px;height:13px"></div>
<div class="msep" style="top:509px"></div>
<div style="left:28px;top:518px;width:54px;height:10px;background:#f4f4f4"></div>
<div class="ul" style="left:27px;top:529px;width:9px"></div>
<div style="left:220px;top:520px;width:44px;height:11px;background:#8a8a8a"></div>
<div style="left:28px;top:373px;width:1px;height:1px;background:#000"></div><div style="left:43px;top:373px;width:1px;height:1px;background:#000"></div><div style="left:73px;top:373px;width:1px;height:1px;background:#000"></div><div style="left:88px;top:373px;width:1px;height:1px;background:#000"></div><div style="left:118px;top:373px;width:1px;height:1px;background:#000"></div><div style="left:28px;top:489px;width:1px;height:1px;background:#000"></div><div style="left:63px;top:489px;width:1px;height:1px;background:#000"></div><div style="left:80px;top:489px;width:1px;height:1px;background:#000"></div><div style="left:95px;top:489px;width:1px;height:1px;background:#000"></div><div style="left:110px;top:489px;width:1px;height:1px;background:#000"></div><div style="left:118px;top:489px;width:1px;height:1px;background:#000"></div><div style="left:123px;top:489px;width:1px;height:1px;background:#000"></div>
<div style="left:117px;top:305px;width:1px;height:1px;background:#000"></div><div style="left:132px;top:305px;width:1px;height:1px;background:#000"></div><div style="left:147px;top:305px;width:1px;height:1px;background:#000"></div><div style="left:73px;top:325px;width:1px;height:1px;background:#000"></div>
<!-- MENU ICONS -->
<svg style="left:3px;top:51px" width="16" height="18" viewBox="0 0 16 18">
<path d="M1.75 1.75H10L14.25 6V16.25H1.75Z" fill="#e6e6e6" stroke="#737373" stroke-width="1.5" stroke-linejoin="round"/>
<path d="M10 1.75V6H14.25" fill="#fff" stroke="#737373" stroke-width="1.5"/>
</svg>
<svg style="left:3px;top:71px" width="18" height="17" viewBox="0 0 18 17">
<path d="M1.5 5.5H7V4.5H15.5V15.5H1.5Z" fill="#e6e6e6" stroke="#888"/>
<path d="M5.5 1.5H13L16.5 5V11H5.5Z" fill="#fbfbfb" stroke="#8a8a8a"/>
<path d="M7 4H11M7 6H13M7 8H13" stroke="#aaa" stroke-width="0.8"/>
<rect x="2" y="6.5" width="3" height="1" fill="#f08a30"/>
<path d="M1.5 9H16.5V15.5H1.5Z" fill="#f28a28"/>
<path d="M2 9.5H16V11H2Z" fill="#fbb060"/>
<path d="M1.5 15.5H16.5" stroke="#999"/>
</svg>
<svg style="left:4px;top:149px" width="14" height="13" viewBox="0 0 14 13">
<path d="M2 1.5L12 11.5M12 1.5L2 11.5" stroke="#000" stroke-width="2.8" stroke-linecap="round"/>
</svg>
<svg style="left:5px;top:168px" width="14" height="15" viewBox="0 0 14 15">
<path d="M1 1H13V14H1Z" fill="#f4f4f4" stroke="#dedede"/>
<path d="M3.5 1V5.5H10.5V1" fill="#f8f8f8" stroke="#e0e0e0"/>
<path d="M2.5 8.5H11.5M2.5 10.5H11.5" stroke="#e2e2e2"/>
<rect x="1" y="12.5" width="12" height="1.5" fill="#d0d0d0"/>
</svg>
<svg style="left:4px;top:187px" width="17" height="17" viewBox="0 0 17 17">
<rect x="1" y="1" width="14" height="15" fill="#e4e2ec" stroke="#7a7a88"/>
<path d="M4 1V6H11V1" fill="#fff" stroke="#7a7a88"/>
<rect x="2.5" y="9" width="11" height="4.5" fill="#fafafa" stroke="#999" stroke-width="0.6"/>
<rect x="2" y="14" width="12" height="1.6" fill="#8a3a98"/>
<path d="M6 12L15.5 2.5" stroke="#e88420" stroke-width="3"/>
<path d="M6 12L15.5 2.5" stroke="#f8c060" stroke-width="1"/>
<path d="M5 13.5L6.5 11.5" stroke="#222" stroke-width="1.5"/>
</svg>
<svg style="left:4px;top:235px" width="17" height="18" viewBox="0 0 17 18">
<rect x="1" y="1.5" width="14.5" height="15" rx="2" fill="#f3f3f3" stroke="#dedede"/>
<path d="M4 4C5 3 11 3 12 4M5.5 6.5C6.5 5.5 9.5 5.5 10.5 6.5" stroke="#e0e0e0" fill="none"/>
<rect x="6.5" y="9" width="3.5" height="5" fill="#f8f8f8" stroke="#dcdcdc"/>
</svg>
<svg style="left:4px;top:283px" width="17" height="17" viewBox="0 0 17 17">
<path d="M3.5 1.5H12L15.5 5V15.5H3.5Z" fill="#ececec" stroke="#7e7e7e"/>
<path d="M12 1.5V5H15.5" fill="#fff" stroke="#7e7e7e"/>
<path d="M0.5 8.8H8" stroke="#e0a050" stroke-width="1.2"/>
<path d="M6 8.8H8V5.8L12.5 8.8L8 11.8V8.8" fill="#c87a10" stroke="#b06a08" stroke-width="1.2" stroke-linejoin="round"/>
</svg>
<svg style="left:4px;top:351px" width="15" height="18" viewBox="0 0 15 18">
<path d="M1.75 1.75H10L13.25 5V16.25H1.75Z" fill="#f6f6f6" stroke="#767676" stroke-width="1.5" stroke-linejoin="round"/>
<path d="M10 1.75V5H13.25" fill="#fff" stroke="#767676" stroke-width="1.2"/>
<rect x="3" y="3" width="9" height="12" fill="#e4e4e4"/>
<path d="M4.5 8.5C4 10 5.5 11.5 7 11L10.5 14.5" stroke="#909090" stroke-width="1.8" fill="none"/>
<path d="M4.5 8.5L6 9.8L7 8.8L5.8 7.4" stroke="#909090" stroke-width="1.2" fill="none"/>
</svg>
<div style="left:4px;top:449px;width:15px;height:15px;border:1px solid #7a7a7a;background:#fff"></div>
<svg style="left:3px;top:467px" width="18" height="18" viewBox="0 0 18 18"><path d="M4.5 1.5H10L12.5 4V9H4.5Z" fill="#f6f6f6" stroke="#9a9a9a" stroke-width="0.9"/><path d="M10 1.5V4H12.5" fill="#ddd" stroke="#9a9a9a" stroke-width="0.7"/><rect x="2.5" y="8" width="13" height="5" fill="#2a2a2a"/><rect x="1" y="9" width="3" height="7" fill="#e4e6ea" stroke="#555" stroke-width="0.8"/><rect x="14" y="9" width="3" height="7" fill="#e4e6ea" stroke="#555" stroke-width="0.8"/><rect x="15" y="12" width="1.2" height="1.2" fill="#4c4"/><rect x="3" y="13" width="12" height="3.5" fill="#fafafa" stroke="#444" stroke-width="0.8"/></svg>
<svg style="left:3px;top:488px" width="18" height="18" viewBox="0 0 18 18"><path d="M7.5 1.5H15.5V10H7.5Z" fill="#f8f8f8" stroke="#8a8a8a" stroke-width="0.9"/><path d="M9 3.5H14M9 5.5H14" stroke="#aaa" stroke-width="0.8"/><path d="M5 9.5H17V15.5H5Z" fill="#f0f0f0" stroke="#8a8a8a" stroke-width="0.9"/><path d="M2.5 13C1.3 14 1.5 16.3 3.3 16.5C4.5 16.6 5.3 15.8 5.5 15L11 9.5C12.2 9.5 14 8.8 14 7C14 5.8 13.5 5 13 4.8L11.5 6.5L10.2 6L10.5 4.2C8.8 4.2 7.6 5.4 7.6 6.8C7.6 7.3 7.8 7.7 8 8Z" fill="#fbfbfb" stroke="#808080" stroke-width="1"/></svg>
<svg style="left:3px;top:515px" width="17" height="16" viewBox="0 0 17 16">
<rect x="8.5" y="0.5" width="7.5" height="14.5" fill="#2f6a2a" stroke="#1a3a18"/>
<path d="M8.5 0.5L12 2V15.5L8.5 15Z" fill="#d0d0d0" stroke="#888" stroke-width="0.6"/>
<path d="M1 6H6V3L11.5 8L6 13V10H1Z" fill="#e42020" stroke="#a00000" stroke-width="0.8" stroke-linejoin="round"/>
</svg>
<svg style="left:11px;top:30px" width="16" height="23" viewBox="0 0 16 23">
<path d="M2 1.5V18L5.8 14.5L8.6 20.8L11.2 19.6L8.6 13.3H13.6Z" fill="#f4f4f4" stroke="#000" stroke-width="1.4" stroke-linejoin="round"/>
</svg>
</body></html>
